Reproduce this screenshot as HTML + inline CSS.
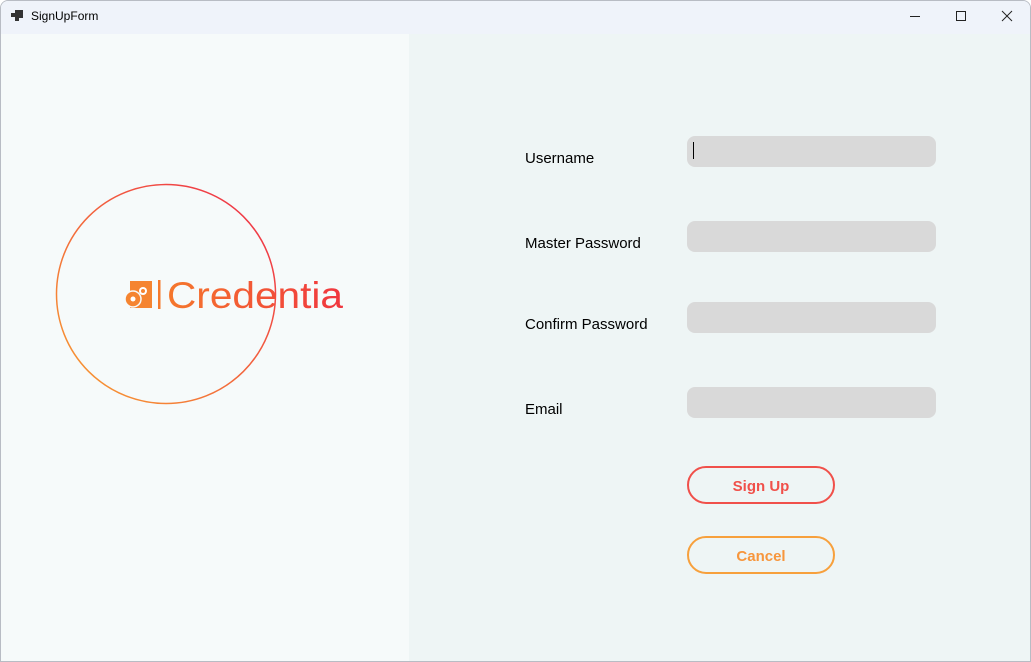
<!DOCTYPE html>
<html><head><style>
*{margin:0;padding:0;box-sizing:border-box}
body{width:1031px;height:662px;overflow:hidden;background:#fff;font-family:"Segoe UI","Liberation Sans",sans-serif;position:relative}
.win{position:absolute;left:0;top:0;width:1031px;height:662px;border:1px solid #b8bcc4;border-radius:8px 8px 0 0;background:#eff3fa;overflow:hidden}
.title{position:absolute;left:0;top:0;width:100%;height:33px;background:#eff3fa}
.title span{position:absolute;left:30px;top:8px;font-size:12px;color:#000}
.left{position:absolute;left:0;top:33px;width:408px;height:628px;background:#f6fafa}
.right{position:absolute;left:408px;top:33px;width:621px;height:628px;background:#eef5f5}
.lbl{position:absolute;left:524px;font-size:15px;color:#000}
.inp{position:absolute;left:686px;width:249px;height:31px;background:#d9d9d9;border-radius:8px}
.btn{position:absolute;left:686px;width:148px;height:38px;border:2px solid;border-radius:19px;text-align:center;font-weight:bold;font-size:15px;line-height:37px}
</style></head><body>
<div class="win">
<div class="title">
<svg style="position:absolute;left:10px;top:9px" width="12" height="12"><rect x="4" y="0" width="8" height="8" fill="#333"/><rect x="0" y="3" width="4" height="4" fill="#333"/><rect x="4" y="8" width="4" height="3" fill="#333"/></svg>
<span>SignUpForm</span>
<svg style="position:absolute;left:904px;top:8px" width="120" height="16" stroke="#222" fill="none" stroke-width="1">
<line x1="5" y1="7.5" x2="15" y2="7.5"/>
<rect x="51.5" y="2.5" width="9" height="9"/>
<line x1="97" y1="2" x2="107" y2="12"/><line x1="107" y1="2" x2="97" y2="12"/>
</svg>
</div>
<div class="left"></div>
<div class="right"></div>
<svg style="position:absolute;left:-1px;top:-1px" width="420" height="662">
<defs>
<linearGradient id="g" x1="0" y1="1" x2="1" y2="0"><stop offset="0" stop-color="#f7a030"/><stop offset="1" stop-color="#ee2a4a"/></linearGradient>
<linearGradient id="t" x1="0" y1="0" x2="1" y2="0"><stop offset="0" stop-color="#f5782c"/><stop offset="1" stop-color="#f0363f"/></linearGradient>
</defs>
<circle cx="166" cy="294" r="109.5" fill="none" stroke="url(#g)" stroke-width="1.5"/>
<path d="M130 281h22v27h-22z" fill="#f58430"/>
<circle cx="133" cy="299" r="8" fill="#f58430" stroke="#f6fafa" stroke-width="1.5"/>
<circle cx="133" cy="299" r="2.5" fill="#fff"/>
<circle cx="143" cy="291" r="4" fill="#fff"/><circle cx="143" cy="291" r="2" fill="#f58430"/>
<rect x="158" y="280" width="2.5" height="29" fill="#f57a2c"/>
<text x="167" y="308" font-family="Liberation Sans,sans-serif" font-size="37" textLength="176" lengthAdjust="spacingAndGlyphs" fill="url(#t)">Credentia</text>
</svg>
<div class="lbl" style="top:149px">Username</div>
<div class="lbl" style="top:234px">Master Password</div>
<div class="lbl" style="top:315px">Confirm Password</div>
<div class="lbl" style="top:400px">Email</div>
<div class="inp" style="top:135px"><div style="position:absolute;left:6px;top:6px;width:1px;height:17px;background:#000"></div></div>
<div class="inp" style="top:220px"></div>
<div class="inp" style="top:301px"></div>
<div class="inp" style="top:386px"></div>
<div class="btn" style="top:465px;border-color:#f0504a;color:#f0504a">Sign Up</div>
<div class="btn" style="top:535px;border-color:#f7a03c;color:#f7963c">Cancel</div>
</div>
</body></html>
